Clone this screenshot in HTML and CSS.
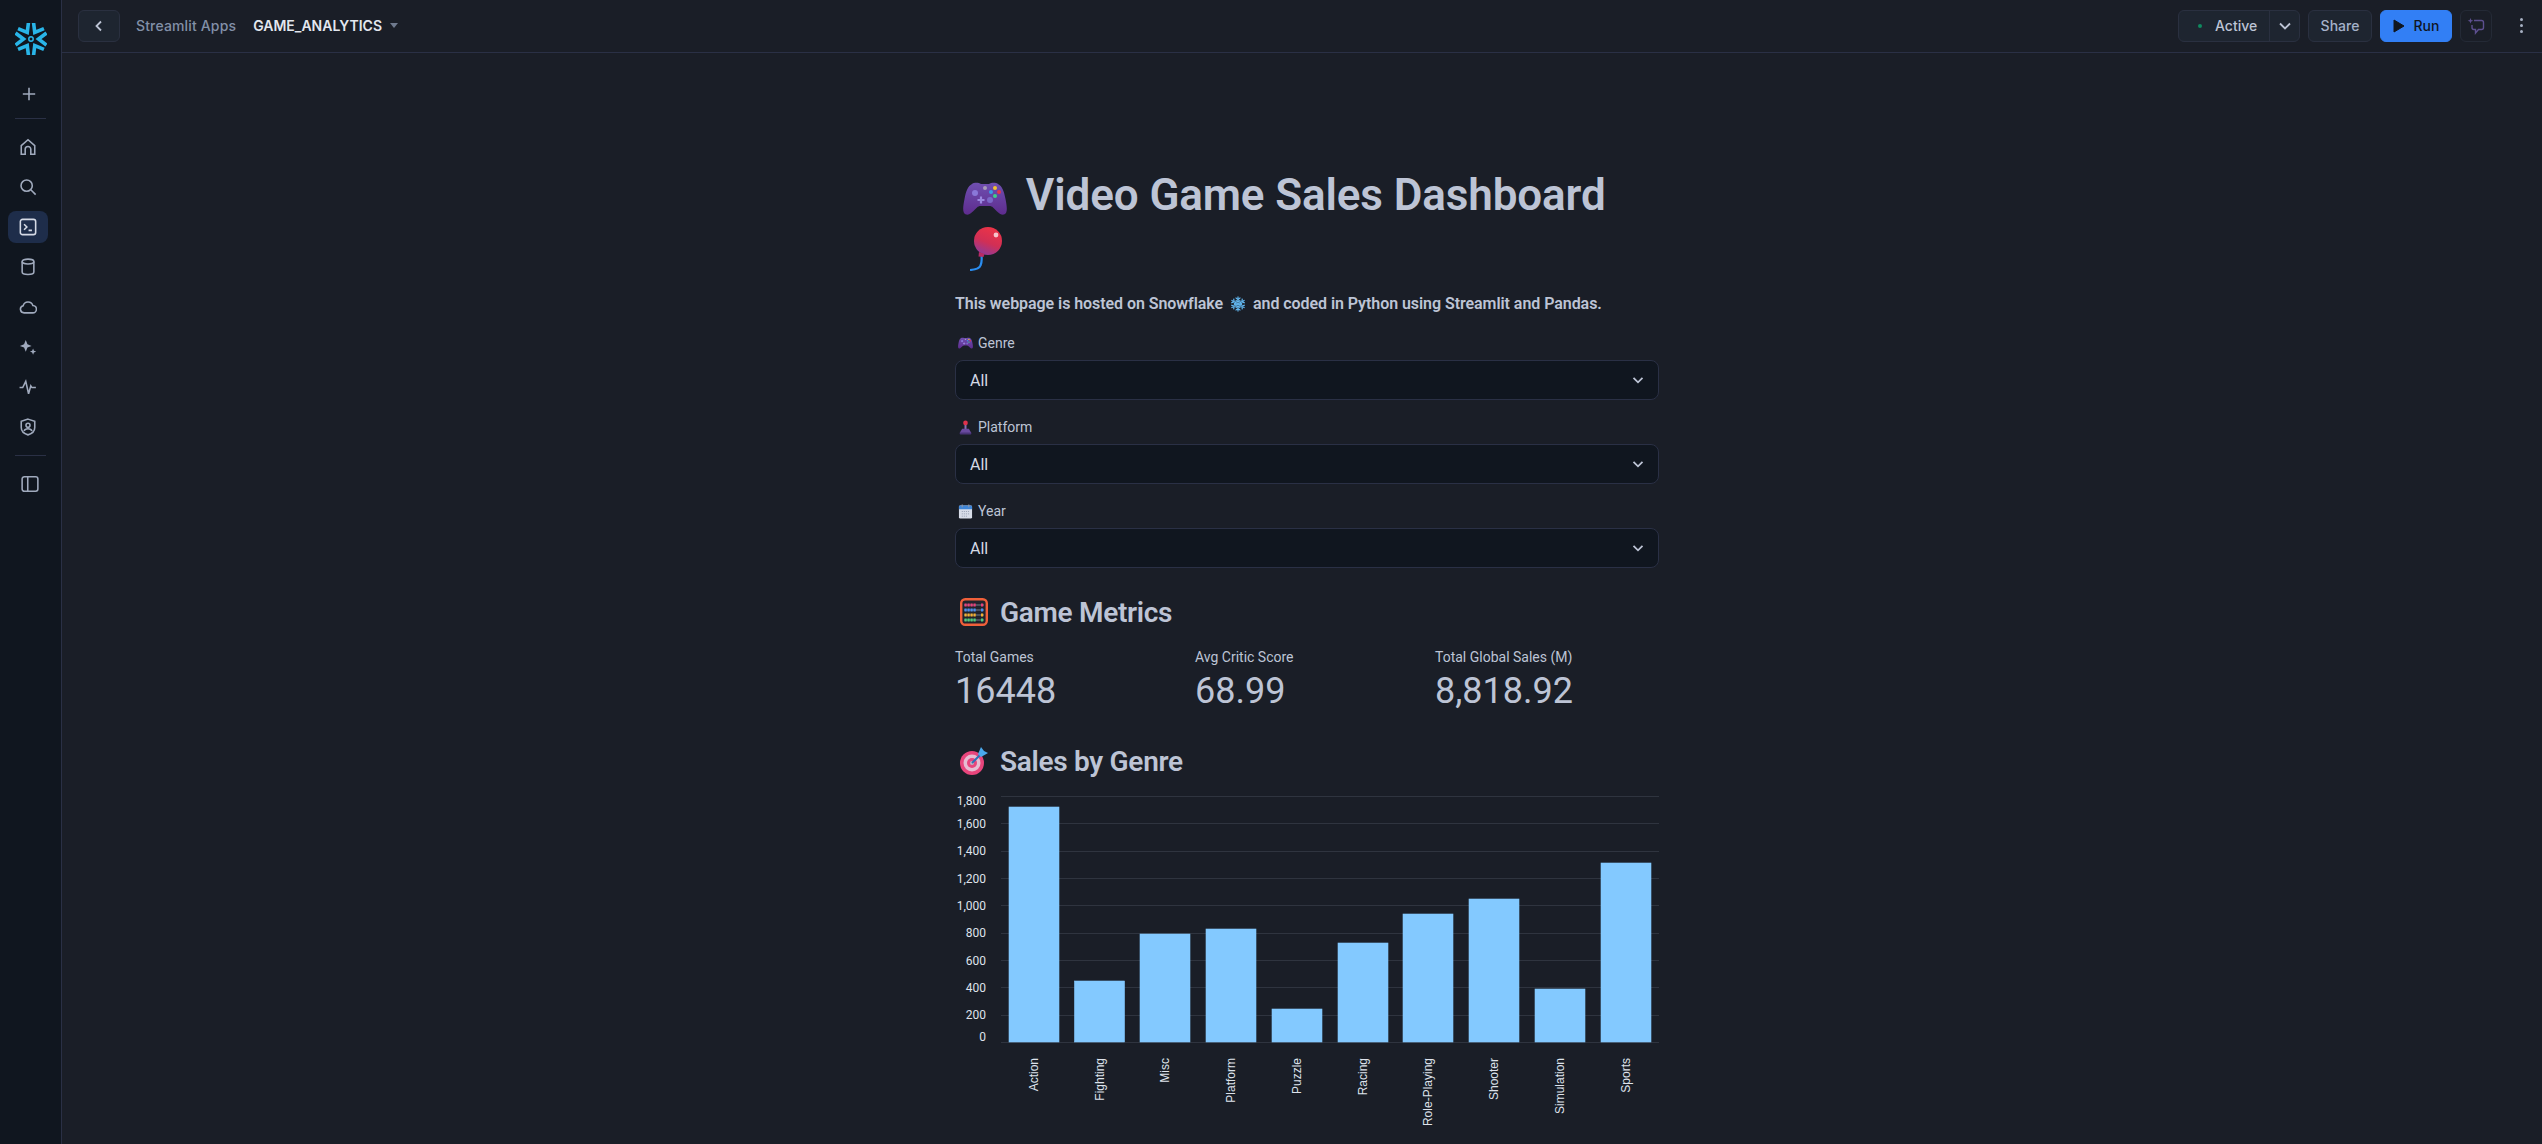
FILE: index.html
```html
<!DOCTYPE html>
<html lang="en">

<head>
    <meta charset="utf-8">
    <meta name="viewport" content="width=device-width, initial-scale=1.0">
    <title>GAME_ANALYTICS - Streamlit Apps</title>
    <link rel="stylesheet" href="styles.css">
</head>

<body>
    <svg class="defs" width="0" height="0">
        <defs>
            <linearGradient id="padfill" x1="0" y1="0" x2="0" y2="1">
                <stop offset="0" stop-color="#6f4fb0"/>
                <stop offset="1" stop-color="#5e2c8e"/>
            </linearGradient>
        </defs>
        <symbol id="gamepad" viewBox="0 0 44 33">
            <path d="M9 2C12 0 16 1 18 2H26C28 1 32 0 35 2C39 4 41 9 42.500 17C44 25 45 31 41 32.500C37 33.500 34 29 30 25.500C29 24.500 28 24 26 24H18C16 24 15 24.500 14 25.500C10 29 7 33.500 3 32.500C-1 31 0 25 1.500 17C3 9 5 4 9 2Z" fill="url(#padfill)"/>
            <circle cx="12" cy="11" r="3" fill="#8a78d8"/>
            <circle cx="27" cy="18" r="3" fill="#7b68c8"/>
            <circle cx="22" cy="6" r="2" fill="#a79bb8"/>
            <path d="M18 14.500v7M14.500 18h7" stroke="#9a88e0" stroke-width="2.200"/>
            <circle cx="32" cy="6" r="2" fill="#f4c430"/>
            <circle cx="28" cy="10" r="2" fill="#3b9ae8"/>
            <circle cx="36" cy="10" r="2" fill="#e8344a"/>
            <circle cx="32" cy="14" r="2" fill="#3ecf8b"/>
        </symbol>
    </svg>

    <div class="app">
        <nav class="sidebar">
            <svg class="logo" viewBox="-16 -16 32 32" width="32" height="32">
                <g fill="none" stroke="#29b5e8" stroke-width="3.600">
                    <g id="arm" transform="rotate(30)"><path d="M-6-15.500 0-7.500l6-8"/></g>
                    <use href="#arm" transform="rotate(60)"/>
                    <use href="#arm" transform="rotate(120)"/>
                    <use href="#arm" transform="rotate(180)"/>
                    <use href="#arm" transform="rotate(240)"/>
                    <use href="#arm" transform="rotate(300)"/>
                    <circle r="2.200" stroke-width="1.500"/>
                </g>
            </svg>

            <button class="nav-btn nav-plus">
                <svg viewBox="0 0 16 16"><path d="M8 2.500v11M2.500 8h11"/></svg>
            </button>
            <hr class="nav-line nav-line-top">
            <button class="nav-btn">
                <svg viewBox="0 0 16 16"><path d="M2 14.500V6.800L8 1.500l6 5.300v7.700h-3.500V10a2.500 2.500 0 0 0-5 0v4.500z"/></svg>
            </button>
            <button class="nav-btn">
                <svg viewBox="0 0 16 16"><circle cx="6.800" cy="6.800" r="5"/><path d="M10.500 10.500l4.300 4.300"/></svg>
            </button>
            <button class="nav-btn nav-active">
                <svg viewBox="0 0 16 16"><rect x="1.200" y="1.200" width="13.600" height="13.600" rx="2"/><path d="M4.500 5.500L7 8l-2.500 2.500M8.500 11h3"/></svg>
            </button>
            <button class="nav-btn">
                <svg viewBox="0 0 16 16"><ellipse cx="8" cy="3.200" rx="5.200" ry="2.200"/><path d="M2.800 3.200v9.300c0 1.200 2.300 2.200 5.200 2.200s5.200-1 5.200-2.200V3.200"/></svg>
            </button>
            <button class="nav-btn">
                <svg viewBox="0 0 16 16"><path d="M4.500 13.200a3.200 3.200 0 0 1-.8-6.300 4.500 4.500 0 0 1 8.600-.3 3.300 3.300 0 0 1-.2 6.600z"/></svg>
            </button>
            <button class="nav-btn">
                <svg viewBox="0 0 16 16"><path class="solid" d="M6 1.800l1.500 3.700L11.200 7 7.500 8.500 6 12.200 4.500 8.500.8 7l3.700-1.500zM12.500 9.300l.8 2 2 .8-2 .8-.8 2-.8-2-2-.8 2-.8z"/></svg>
            </button>
            <button class="nav-btn">
                <svg viewBox="0 0 16 16"><path d="M.5 8.500h2.800L6 3l2.500 11 2-7 1 1.500h3.500"/></svg>
            </button>
            <button class="nav-btn">
                <svg viewBox="0 0 16 16"><path d="M8 1l6 2v5.500c0 3-2.500 5.500-6 6.500-3.500-1-6-3.500-6-6.500V3z"/><circle cx="8" cy="6.500" r="1.800"/><path d="M4.500 11.500c.5-1.500 2-2 3.500-2s3 .5 3.500 2"/></svg>
            </button>
            <hr class="nav-line nav-line-bottom">
            <button class="nav-btn nav-panel">
                <svg viewBox="0 0 16 16"><rect x="1" y="1.500" width="14" height="13" rx="2"/><path d="M6 1.500v13"/></svg>
            </button>
        </nav>

        <div class="page">
            <header class="topbar">
                <button class="btn btn-back">
                    <svg viewBox="0 0 16 16" width="16" height="16"><path d="M10 3.500L5.500 8l4.500 4.500"/></svg>
                </button>
                <span class="crumb">Streamlit Apps</span>
                <span class="app-name">GAME_ANALYTICS</span>
                <span class="caret"></span>

                <div class="actions">
                    <div class="status-group">
                        <div class="status"><span class="dot"></span>Active</div>
                        <div class="status-more">
                            <svg viewBox="0 0 16 16" width="16" height="16"><path d="M3 5.500L8 10.500l5-5"/></svg>
                        </div>
                    </div>
                    <button class="btn btn-share">Share</button>
                    <button class="btn btn-run">
                        <svg viewBox="0 0 12 14" width="12" height="14"><path d="M1 1l10 6-10 6z"/></svg>
                        Run
                    </button>
                    <button class="btn btn-chat">
                        <svg viewBox="0 0 18 18" width="18" height="18"><path d="M7 3.500h7.500a2 2 0 0 1 2 2v5a2 2 0 0 1-2 2h-3L8.500 16v-3.500H7a2 2 0 0 1-2-2V8"/><path class="spark" d="M3.500 1l.8 2 2 .8-2 .8-.8 2-.8-2-2-.8 2-.8z"/></svg>
                    </button>
                    <div class="kebab"><span></span><span></span><span></span></div>
                </div>
            </header>

            <main class="main">
                <div class="content">
                    <h1 class="title">
                        <svg class="emoji-game" width="44" height="33"><use href="#gamepad"/></svg>
                        Video Game Sales Dashboard
                        <svg class="emoji-balloon" viewBox="0 0 32 44" width="32" height="44">
                            <defs>
                                <linearGradient id="balloon" x1=".7" y1="0" x2=".3" y2="1">
                                    <stop offset="0" stop-color="#ee3446"/>
                                    <stop offset=".55" stop-color="#d12f55"/>
                                    <stop offset="1" stop-color="#8e3a9c"/>
                                </linearGradient>
                            </defs>
                            <path d="M11.500 29c.5 4 0 7-1 9.500C9.500 41.500 6 42.500 0 43" fill="none" stroke="#2a8df0" stroke-width="2.200"/>
                            <circle cx="18" cy="14" r="14" fill="url(#balloon)"/>
                            <path d="M9 25l-.5 4.500 5 .5 1-3z" fill="#b82a66"/>
                            <circle cx="26" cy="8" r="2.400" fill="#f7c3cb"/>
                        </svg>
                    </h1>

                    <p class="intro">This webpage is hosted on Snowflake
                        <svg class="emoji-flake" viewBox="-10 -10 20 20" width="16" height="16">
                            <g stroke="#62b6ee" stroke-width="1.500" fill="none">
                                <path id="flake" d="M0 0V-9.500M-3-8 0-5.500 3-8M-2.500-4.500 0-2.500 2.500-4.500"/>
                                <use href="#flake" transform="rotate(60)"/>
                                <use href="#flake" transform="rotate(120)"/>
                                <use href="#flake" transform="rotate(180)"/>
                                <use href="#flake" transform="rotate(240)"/>
                                <use href="#flake" transform="rotate(300)"/>
                            </g>
                        </svg>
                        and coded in Python using Streamlit and Pandas.</p>

                    <div class="field">
                        <label class="field-label">
                            <svg width="15" height="12"><use href="#gamepad"/></svg>
                            Genre
                        </label>
                        <div class="select">All
                            <svg viewBox="0 0 16 16" width="16" height="16"><path d="M3.500 5.800L8 10.300l4.500-4.500"/></svg>
                        </div>
                    </div>

                    <div class="field">
                        <label class="field-label">
                            <svg viewBox="0 0 16 18" width="15" height="15">
                                <rect x="6.800" y="5" width="2.400" height="7" fill="#8a6fb5"/>
                                <circle cx="8" cy="3.500" r="2.800" fill="#e0324d"/>
                                <path d="M4 10.500h8l3 5H1z" fill="#6a4aa0"/>
                                <rect x="1" y="15" width="14" height="2.500" rx="1" fill="#4a3478"/>
                            </svg>
                            Platform
                        </label>
                        <div class="select">All
                            <svg viewBox="0 0 16 16" width="16" height="16"><path d="M3.500 5.800L8 10.300l4.500-4.500"/></svg>
                        </div>
                    </div>

                    <div class="field">
                        <label class="field-label">
                            <svg viewBox="0 0 16 16" width="15" height="15">
                                <rect x="1" y="1.500" width="14" height="14" rx="1.500" fill="#d8dde8"/>
                                <path d="M1 3a1.500 1.500 0 0 1 1.500-1.500h11A1.500 1.500 0 0 1 15 3v2.500H1z" fill="#3f86d8"/>
                                <path d="M4.500.5v3M11.500.5v3" stroke="#8a93a6" stroke-width="1.200"/>
                                <path d="M4 8h8M4 10.500h8M4 13h6" stroke="#9aa3b5" stroke-dasharray="1.200 1"/>
                            </svg>
                            Year
                        </label>
                        <div class="select">All
                            <svg viewBox="0 0 16 16" width="16" height="16"><path d="M3.500 5.800L8 10.300l4.500-4.500"/></svg>
                        </div>
                    </div>

                    <h3 class="section">
                        <svg viewBox="0 0 28 28" width="28" height="28">
                            <rect x="1.200" y="1.200" width="25.600" height="25.600" rx="4" fill="#20232c" stroke="#f0603a" stroke-width="2.400"/>
                            <path d="M4 7h20M4 12h20M4 17h20M4 22h20" stroke="#8b93a5" stroke-width=".8"/>
                            <path d="M4.500 7h12M21 7h3" stroke="#e8407a" stroke-width="3.200" stroke-dasharray="2.200 .8"/>
                            <path d="M4.500 12h12M21 12h3" stroke="#4a8ef0" stroke-width="3.200" stroke-dasharray="2.200 .8"/>
                            <path d="M4.500 17h12M21 17h3" stroke="#f4b030" stroke-width="3.200" stroke-dasharray="2.200 .8"/>
                            <path d="M4.500 22h12M21 22h3" stroke="#4cd07a" stroke-width="3.200" stroke-dasharray="2.200 .8"/>
                        </svg>
                        Game Metrics
                    </h3>

                    <div class="metrics">
                        <div class="metric">
                            <div class="metric-label">Total Games</div>
                            <div class="metric-value">16448</div>
                        </div>
                        <div class="metric">
                            <div class="metric-label">Avg Critic Score</div>
                            <div class="metric-value">68.99</div>
                        </div>
                        <div class="metric">
                            <div class="metric-label">Total Global Sales (M)</div>
                            <div class="metric-value">8,818.92</div>
                        </div>
                    </div>

                    <h3 class="section section-chart">
                        <svg viewBox="0 0 28 28" width="28" height="28">
                            <circle cx="12" cy="16" r="12" fill="#e8457c"/>
                            <circle cx="12" cy="16" r="8.500" fill="#e6bcd2"/>
                            <circle cx="12" cy="16" r="5" fill="#e8457c"/>
                            <circle cx="12" cy="16" r="2" fill="#b9b4c4"/>
                            <path d="M12 16L22 6" stroke="#2f6fb8" stroke-width="2"/>
                            <path d="M18 7l3-7 3 4 4 2-7 4z" fill="#4aa8ec"/>
                        </svg>
                        Sales by Genre
                    </h3>

                    <svg class="chart" viewBox="0 0 704 354" width="704" height="354">
                        <g class="grid">
                            <path d="M46 6.500H704M46 33.500H704M46 61.500H704M46 88.500H704M46 115.500H704M46 143.500H704M46 170.500H704M46 197.500H704M46 225.500H704M46 252.500H704"/>
                        </g>
                        <g class="bars">
                            <rect x="54" y="17" width="50" height="235"/>
                            <rect x="119.500" y="191" width="50" height="61"/>
                            <rect x="185" y="144" width="50" height="108"/>
                            <rect x="251" y="139" width="50" height="113"/>
                            <rect x="317" y="219" width="50" height="33"/>
                            <rect x="383" y="153" width="50" height="99"/>
                            <rect x="448" y="124" width="50" height="128"/>
                            <rect x="514" y="109" width="50" height="143"/>
                            <rect x="580" y="199" width="50" height="53"/>
                            <rect x="646" y="73" width="50" height="179"/>
                        </g>
                        <g class="y-labels">
                            <text x="31" y="15">1,800</text>
                            <text x="31" y="38">1,600</text>
                            <text x="31" y="65">1,400</text>
                            <text x="31" y="93">1,200</text>
                            <text x="31" y="120">1,000</text>
                            <text x="31" y="147">800</text>
                            <text x="31" y="175">600</text>
                            <text x="31" y="202">400</text>
                            <text x="31" y="229">200</text>
                            <text x="31" y="251">0</text>
                        </g>
                        <g class="x-labels">
                            <text transform="translate(83 268) rotate(-90)">Action</text>
                            <text transform="translate(149 268) rotate(-90)">Fighting</text>
                            <text transform="translate(214 268) rotate(-90)">Misc</text>
                            <text transform="translate(280 268) rotate(-90)">Platform</text>
                            <text transform="translate(346 268) rotate(-90)">Puzzle</text>
                            <text transform="translate(412 268) rotate(-90)">Racing</text>
                            <text transform="translate(477 268) rotate(-90)">Role-Playing</text>
                            <text transform="translate(543 268) rotate(-90)">Shooter</text>
                            <text transform="translate(609 268) rotate(-90)">Simulation</text>
                            <text transform="translate(675 268) rotate(-90)">Sports</text>
                        </g>
                    </svg>
                </div>
            </main>
        </div>
    </div>
</body>

</html>
```

FILE: styles.css
```css
* {
    margin: 0;
    padding: 0;
    box-sizing: border-box;
}

body {
    width: 100%;
    height: 100vh;
    overflow: hidden;
    background: #1a1e27;
    font-family: Roboto, sans-serif;
    color: #bdc4d5;
}

.defs {
    position: absolute;
}

.app {
    display: flex;
    height: 100vh;
}

/* left rail */
.sidebar {
    width: 62px;
    flex-shrink: 0;
    background: #10161f;
    border-right: 1px solid #2a3045;
    display: flex;
    flex-direction: column;
    align-items: center;
    padding-top: 23px;
}

.logo {
    display: block;
    margin-bottom: 23px;
}

.nav-btn {
    width: 40px;
    height: 32px;
    margin: 0 5px 8px 0;
    border: none;
    border-radius: 8px;
    background: transparent;
    display: flex;
    justify-content: center;
    align-items: center;
}

.nav-btn svg {
    width: 18px;
    height: 18px;
    fill: none;
    stroke: #a0aabd;
    stroke-width: 1.400;
}

.nav-btn .solid {
    fill: #a0aabd;
    stroke: none;
}

.nav-active {
    background: #1e2d4a;
}

.nav-active svg {
    stroke: #d5dae5;
}

.nav-plus {
    margin-bottom: 0;
    margin-right: 3px;
}

.nav-line {
    width: 31px;
    border: none;
    border-top: 1px solid #2a3045;
}

.nav-line-top {
    margin: 8px 0 12px;
}

.nav-line-bottom {
    margin: 4px 0 12px;
}

.nav-panel {
    margin-right: 1px;
}

/* top bar */
.page {
    flex: 1;
    display: flex;
    flex-direction: column;
    min-width: 0;
}

.topbar {
    height: 53px;
    flex-shrink: 0;
    border-bottom: 1px solid #2a3045;
    display: flex;
    align-items: center;
    padding: 0 0 1px 16px;
    font-family: Inter, sans-serif;
    font-size: 14px;
    font-weight: 500;
}

.btn {
    height: 32px;
    border: 1px solid #2a3040;
    border-radius: 6px;
    background: #1e2530;
    color: #bdc4d5;
    font-family: Inter, sans-serif;
    font-size: 14px;
    font-weight: 500;
    display: flex;
    justify-content: center;
    align-items: center;
}

.btn svg {
    fill: none;
    stroke: #bdc4d5;
    stroke-width: 1.800;
}

.btn-back {
    width: 42px;
}

.crumb {
    margin-left: 16px;
    letter-spacing: .15px;
    color: #8290a8;
}

.app-name {
    margin-left: 17px;
    color: #e3e7ef;
    font-weight: 600;
}

.caret {
    margin-left: 8px;
    border-left: 4px solid transparent;
    border-right: 4px solid transparent;
    border-top: 5px solid #6f7a8e;
}

.actions {
    margin-left: auto;
    display: flex;
    align-items: center;
    gap: 8px;
}

.status-group {
    width: 122px;
    height: 32px;
    display: flex;
    border: 1px solid #2a3040;
    border-radius: 6px;
    background: #1e2530;
}

.status {
    width: 91px;
    display: flex;
    align-items: center;
    padding-left: 19px;
    gap: 13px;
    border-right: 1px solid #2a3040;
}

.dot {
    width: 4px;
    height: 4px;
    border-radius: 50%;
    background: #0f8a5f;
}

.status-more {
    flex: 1;
    display: flex;
    justify-content: center;
    align-items: center;
}

.status-more svg {
    fill: none;
    stroke: #bdc4d5;
    stroke-width: 1.800;
}

.btn-share {
    width: 64px;
    color: #a5b2ca;
}

.btn-run {
    width: 72px;
    gap: 9px;
    background: #327ff5;
    border-color: #327ff5;
    color: #10161f;
}

.btn-run svg {
    fill: #10161f;
    stroke: #10161f;
    stroke-width: 1;
}

.btn-chat {
    width: 32px;
    background: transparent;
    border-color: #242a36;
}

.btn-chat svg {
    stroke: #5d4f8f;
    stroke-width: 1.400;
}

.btn-chat .spark {
    fill: #5d4f8f;
    stroke: none;
}

.kebab {
    width: 42px;
    display: flex;
    flex-direction: column;
    align-items: center;
    gap: 3px;
}

.kebab span {
    width: 3px;
    height: 3px;
    border-radius: 50%;
    background: #a7b0c2;
}

/* app body */
.main {
    flex: 1;
    display: flex;
    justify-content: center;
    padding: 116px 0 0 10px;
    overflow: hidden;
}

.content {
    width: 704px;
}

.title {
    font-size: 44px;
    font-weight: 600;
    line-height: 52px;
    letter-spacing: -.12px;
    margin-bottom: 18px;
}

.title svg {
    vertical-align: middle;
}

.emoji-game {
    margin: 0 8px 0 8px;
}

.emoji-balloon {
    margin: 0 0 2px 15px;
}

.intro {
    font-size: 16px;
    font-weight: 600;
    line-height: 24px;
    letter-spacing: -.06px;
    padding-top: 1px;
    margin-bottom: 16px;
}

.intro svg {
    vertical-align: -3px;
    margin: 0 3px;
}

.field {
    margin-bottom: 16px;
}

.field-label {
    height: 22px;
    margin-bottom: 6px;
    display: flex;
    align-items: center;
    gap: 5px;
    font-size: 14px;
    padding-left: 3px;
}

.select {
    height: 40px;
    padding: 0 12px 0 14px;
    display: flex;
    justify-content: space-between;
    align-items: center;
    background: #10161f;
    border: 1px solid #2a3045;
    border-radius: 8px;
    font-size: 16px;
    color: #d5dae5;
}

.select svg {
    fill: none;
    stroke: #bdc4d5;
    stroke-width: 1.800;
}

.section {
    height: 56px;
    display: flex;
    align-items: center;
    gap: 12px;
    padding-left: 5px;
    font-size: 28px;
    font-weight: 600;
    letter-spacing: -.3px;
}

.metrics {
    display: grid;
    grid-template-columns: repeat(3, 240px);
    padding-top: 6px;
}

.metric-label {
    font-size: 14px;
    line-height: 22px;
}

.metric-value {
    font-size: 36px;
    line-height: 46px;
}

.section-chart {
    margin-top: 19px;
}

.chart {
    display: block;
    margin-top: 1px;
}

.grid path {
    stroke: #2f343f;
    stroke-width: 1;
}

.bars rect {
    fill: #83c9ff;
    stroke: #83c9ff;
    stroke-width: .6;
}

.y-labels text {
    font-family: Roboto, sans-serif;
    font-size: 12px;
    fill: #dfe3ec;
    text-anchor: end;
}

.x-labels text {
    font-family: "Liberation Sans", sans-serif;
    font-size: 12px;
    fill: #dfe3ec;
    text-anchor: end;
}
```
